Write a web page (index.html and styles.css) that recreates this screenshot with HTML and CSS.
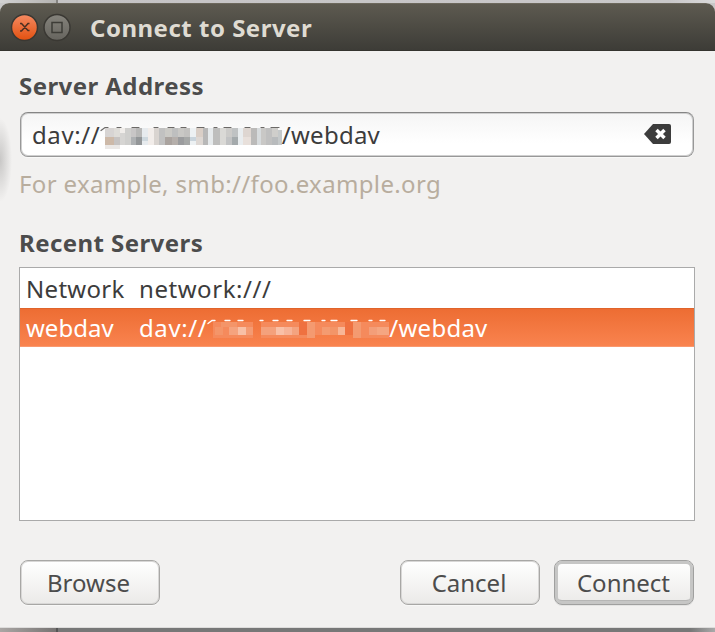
FILE: index.html
```html
<!DOCTYPE html>
<html lang="en">
<head>
<meta charset="utf-8">
<title>Connect to Server</title>
<link rel="stylesheet" href="styles.css">
</head>
<body>
<div class="backdrop-top"></div>
<div class="window">
  <header class="titlebar">
    <svg class="controls" width="62" height="30" viewBox="0 0 62 30">
      <defs>
        <linearGradient id="close" x2="0" y2="1"><stop stop-color="#f58a62"/><stop offset="1" stop-color="#e2500f"/></linearGradient>
        <linearGradient id="max" x2="0" y2="1"><stop stop-color="#85837c"/><stop offset="1" stop-color="#66645e"/></linearGradient>
      </defs>
      <circle cx="15.500" cy="15.500" r="13" fill="url(#close)" stroke="#3a3833" stroke-width="1.5"/>
      <path d="M11 11.500l1.500 0 6.500 7 1.500 0M11 19h1.500l6.500-7.500h1.500" fill="none" stroke="#4b2f22" stroke-width="1.500"/>
      <circle cx="48" cy="15.500" r="13" fill="url(#max)" stroke="#3a3833" stroke-width="1.5"/>
      <rect x="43" y="10.500" width="10" height="10" fill="none" stroke="#3d3c37" stroke-width="1.5"/>
    </svg>
    <h1 class="title">Connect to Server</h1>
  </header>
  <main class="content">
    <h2 class="heading">Server Address</h2>
    <div class="entry">
      <span class="text dav">dav://</span>
      <svg class="mosaic" width="182" height="29" viewBox="0 0 182 29">
        <path d="M1 10.500l4-3h3M17 7.500h4M32 7.500h7M54 7.500h4M68 7.500h6M81 7.500h5M97 7.500h7M114 7.500h3M124 7.500h7M145 7.500h5M161 7.500h3M171 7.500h8" fill="none" stroke="#6b6967" stroke-width="1.200" stroke-linecap="round"/>
        <g shape-rendering="crispEdges">
          <path d="M5 8h9v9h-9z" fill="#d7d4d3"/><path d="M5 17h9v8h-9z" fill="#cdb9a8"/><path d="M5 25h15v4h-15z" fill="#ebe8e6"/>
          <path d="M14 8h6v9h-6z" fill="#dedcd8"/><path d="M14 17h6v8h-6z" fill="#c6c3c2"/>
          <path d="M20 8h5v5h-5z" fill="#f0edea"/><path d="M20 13h5v12h-5z" fill="#d6d5d3"/>
          <path d="M25 8h6v17h-6z" fill="#cfcfcd"/><path d="M31 8h5v9h-5z" fill="#c8c6c6"/><path d="M31 17h5v8h-5z" fill="#aeb1b3"/>
          <path d="M36 8h6v9h-6z" fill="#b8b8b7"/><path d="M36 17h6v8h-6z" fill="#939698"/>
          <path d="M42 8h6v17h-6z" fill="#e7ebee"/><path d="M42 17h6v4h-6z" fill="#ced8de"/><path d="M48 8h6v17h-6z" fill="#f2edea"/>
          <path d="M54 8h5v17h-5z" fill="#d9d4d0"/><path d="M59 8h6v17h-6z" fill="#c1c1c1"/>
          <path d="M65 8h7v9h-7z" fill="#cbcac6"/><path d="M65 17h7v8h-7z" fill="#aaa39f"/>
          <path d="M72 8h6v9h-6z" fill="#bebfbf"/><path d="M72 17h6v8h-6z" fill="#b5afab"/>
          <path d="M78 8h6v9h-6z" fill="#c9c8c5"/><path d="M78 17h6v8h-6z" fill="#9b9c9e"/>
          <path d="M84 8h6v17h-6z" fill="#c3c2c0"/><path d="M84 17h6v8h-6z" fill="#a6a8a7"/>
          <path d="M90 8h6v17h-6z" fill="#edf1f3"/><path d="M90 17h6v4h-6z" fill="#c9d4dc"/>
          <path d="M96 8h7v9h-7z" fill="#dacfc7"/><path d="M96 17h7v8h-7z" fill="#ded8d4"/>
          <path d="M103 8h5v17h-5z" fill="#b8b8b8"/><path d="M108 8h5v17h-5z" fill="#e6eaec"/>
          <path d="M113 8h7v17h-7z" fill="#bebebd"/><path d="M120 8h6v17h-6z" fill="#dad9d6"/>
          <path d="M126 8h6v9h-6z" fill="#cccbc9"/><path d="M126 17h6v8h-6z" fill="#c2c3c4"/>
          <path d="M132 8h6v9h-6z" fill="#bfc2c3"/><path d="M132 17h6v8h-6z" fill="#a4aaac"/>
          <path d="M138 8h5v17h-5z" fill="#e9edef"/><path d="M143 8h8v9h-8z" fill="#ded6d1"/><path d="M143 17h8v8h-8z" fill="#e8e0db"/>
          <path d="M151 8h6v17h-6z" fill="#bbbab9"/><path d="M157 8h4v17h-4z" fill="#d7dbdd"/>
          <path d="M161 8h5v17h-5z" fill="#c9c8c6"/><path d="M166 8h6v17h-6z" fill="#c0c0c0"/>
          <path d="M172 8h6v9h-6z" fill="#cfcecb"/><path d="M172 17h6v8h-6z" fill="#b8bbbd"/><path d="M178 10h4v15h-4z" fill="#c5c9ca"/>
        </g>
      </svg>
      <span class="text path">/webdav</span>
      <svg class="clear" width="27" height="20" viewBox="0 0 27 20"><path d="M0 10L9 0H25Q27 0 27 2V18Q27 20 25 20H9Z" fill="#3c3c3c"/><path d="M12.5 6l8 8M20.500 6l-8 8" stroke="#fff" stroke-width="3.500"/></svg>
    </div>
    <p class="hint">For example, smb://foo.example.org</p>
    <h2 class="heading recent">Recent Servers</h2>
    <div class="list">
      <div class="row"><span class="name network">Network</span><span class="text url">network:///</span></div>
      <div class="row selected"><span class="name">webdav</span><span class="text dav">dav://</span><svg class="mosaic" width="182" height="29" viewBox="0 0 182 29">
        <path d="M1 10.500l4-3h3M18 7.500h5M31 7.500h5M53 7.500h3M66 7.500h5M80 7.500h5M97 7.500h6M115 7.500h3M124 7.500h6M144 7.500h6M162 7.500h3M173 7.500h5" fill="none" stroke="#fff" stroke-width="1.300" stroke-linecap="round"/>
        <g shape-rendering="crispEdges">
          <path d="M6 9h40v16h-40zM54 9h46v16h-46zM100 9h8v16h-8zM108 9h38v13h-38zM146 9h36v16h-36z" fill="#f58a5c"/>
          <path d="M8 14h8v8h-8zM14 9h16v5h-16z" fill="#f49569"/>
          <path d="M22 14h9v8h-9z" fill="#f5a37e"/><path d="M31 14h8v8h-8z" fill="#f8c0a6"/><path d="M39 14h7v8h-7z" fill="#f49b73"/>
          <path d="M54 14h15v8h-15z" fill="#f4a17c"/><path d="M69 14h8v8h-8z" fill="#f9c0a7"/><path d="M77 14h8v8h-8z" fill="#f7b397"/><path d="M85 14h7v8h-7z" fill="#f4a37f"/>
          <path d="M92 9h8v13h-8z" fill="#ef7140"/><path d="M100 9h8v16h-8z" fill="#f49a70"/>
          <path d="M115 14h8v8h-8z" fill="#f49b71"/><path d="M123 14h8v8h-8z" fill="#f39568"/><path d="M131 14h7v8h-7z" fill="#f8b696"/>
          <path d="M138 9h8v13h-8z" fill="#ef7140"/><path d="M146 9h8v16h-8z" fill="#f49a70"/>
          <path d="M162 14h8v8h-8z" fill="#f39e79"/><path d="M170 14h12v8h-12z" fill="#f5a681"/>
        </g>
      </svg><span class="text path">/webdav</span></div>
    </div>
    <footer class="actions">
      <button class="button">Browse</button>
      <button class="button cancel-button">Cancel</button>
      <button class="button default">Connect</button>
    </footer>
  </main>
</div>
<div class="backdrop-bottom"></div>
</body>
</html>
```
FILE: styles.css
```css
* { box-sizing: border-box; }
body { margin: 0; height: 632px; overflow: hidden; font: 24px/32px "Noto Sans", sans-serif; color: #3c3c3c; background: linear-gradient(#c8c8c8 0 20px, #aaa 20px); }
.backdrop-top { height: 3px; background: linear-gradient(90deg, #d2d2d2, #b5b4b2 56px, #858481 56px, #858481 58px, #c5c4c5 58px, #c9c8c9 670px, #dadada); }
.window { height: 625px; background: radial-gradient(ellipse 12px 42px at 0 157px, #c8c7c6, #f2f1f0); border-radius: 9px 9px 0 0; border-bottom: 1px solid #dddcdb; overflow: hidden; }
.backdrop-bottom { height: 4px; background: linear-gradient(90deg, #aaa6a4, #777473 56px, #555 56px, #555 58px, #777 58px, #777 690px, #aaa); }
.titlebar { height: 48px; display: flex; align-items: center; padding-left: 9px; background: linear-gradient(#5d5a50, #3d3c37); border-top: 1px solid #6c685c; border-bottom: 1px solid #35342f; }
.title { margin: 2px 0 0 19px; font-size: 24px; line-height: 32px; letter-spacing: .5px; color: #dfdbd2; }
.content { padding: 19px 20px 0 19px; }
.heading { margin: 0; font-size: 24px; line-height: 32px; letter-spacing: .43px; color: #4c4c4c; }
.entry { height: 45px; margin: 10px 1px 0; display: flex; align-items: center; padding-left: 11px; border: 1px solid #989898; border-top-color: #858585; border-radius: 8px; background: linear-gradient(#f5f5f5, #fff 70%); box-shadow: inset 0 0 0 1px #cfcfcf, 0 1px #f9f9f8; }
.text { white-space: pre; }
.dav { letter-spacing: .6px; }
.path { letter-spacing: .25px; }
.hint { margin: 11px 0 0; letter-spacing: .35px; color: #b8ad9e; }
.recent { margin-top: 27px; }
.list { height: 254px; margin: 8px 0 0; border: 1px solid #aaa; background: #fff; }
.row { height: 39px; display: flex; align-items: center; padding-left: 6px; }
.row:first-child { height: 40px; padding-top: 1px; }
.name { width: 113px; }
.network { letter-spacing: .3px; }
.url { letter-spacing: .55px; }
.selected { background: linear-gradient(#ed6d33, #f9834f); border-top: 1px solid #e0642b; border-bottom: 1px solid #fa986e; color: #fff; }
.mosaic { flex: none; }
.entry .mosaic { margin-left: -.5px; }
.clear { margin-left: auto; margin-right: 22px; margin-bottom: 2px; }
.actions { display: flex; margin-top: 39px; padding: 0 1px; }
.button { width: 140px; height: 45px; font: inherit; color: #4c4c4c; border: 1px solid #a8a7a5; border-radius: 8px; background: linear-gradient(#fff, #ebeae8); box-shadow: inset 0 0 0 1px #d8d7d6, 0 1px #f8f8f7; padding: 0 3px 0 0; }
.cancel-button { margin-left: auto; margin-right: 14px; padding-right: 2px; }
.default { border-color: #a0a09f; box-shadow: inset 0 0 0 3px #c6c6c5, inset 0 -4px #b6b6b5, 0 1px #e4e4e3; padding-right: 1px; }
```
